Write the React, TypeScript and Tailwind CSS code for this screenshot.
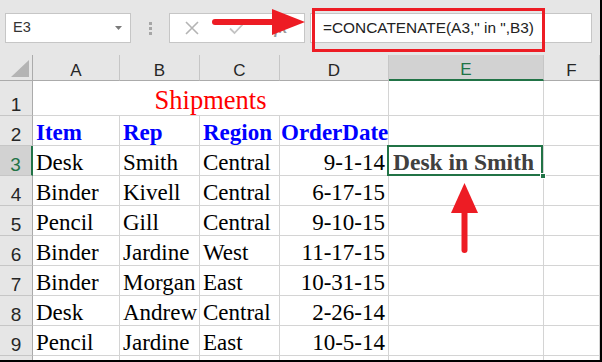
import React from "react";
import clsx from "clsx";

const rows = [
  ["Desk", "Smith", "Central", "9-1-14"],
  ["Binder", "Kivell", "Central", "6-17-15"],
  ["Pencil", "Gill", "Central", "9-10-15"],
  ["Binder", "Jardine", "West", "11-17-15"],
  ["Binder", "Morgan", "East", "10-31-15"],
  ["Desk", "Andrew", "Central", "2-26-14"],
  ["Pencil", "Jardine", "East", "10-5-14"],
];

const cols = ["A", "B", "C", "D", "E", "F"];

// gridline for a normal cell
const cell =
  "flex items-end border-r border-b border-[#d4d4d4] bg-white pb-[1px] leading-none whitespace-nowrap";

function RowHead({ n, active }: { n?: number; active?: boolean }) {
  return (
    <div
      className={clsx(
        "flex items-end justify-center border-b pb-[1px] font-['Liberation_Sans',sans-serif] text-[19px] leading-none",
        active
          ? "bg-[#d2d2d2] text-[#217346] border-r-2 border-r-[#217346] border-b-[#c6c6c6]"
          : "bg-[#e6e6e6] text-[#262626] border-r border-r-[#ababab] border-b-[#c6c6c6]"
      )}
    >
      {n}
    </div>
  );
}

function ColHead({ label, active }: { label: string; active?: boolean }) {
  return (
    <div
      className={clsx(
        "flex items-end justify-center border-r border-r-[#c6c6c6] pb-[1px] font-['Liberation_Sans',sans-serif] text-[17px] leading-none",
        active
          ? "bg-[#d2d2d2] text-[#217346] border-b-2 border-b-[#217346]"
          : "bg-[#e6e6e6] text-[#262626] border-b border-b-[#ababab]"
      )}
    >
      {label}
    </div>
  );
}

export default function App() {
  return (
    <div className="relative flex h-[362px] w-[602px] flex-col overflow-hidden border-r-2 border-b-2 border-black bg-white font-['Liberation_Serif',serif]">
      {/* formula bar */}
      <div className="flex h-[55px] shrink-0 items-start bg-[#e6e6e6] pt-[13px] pl-[5px] pr-[8px]">
        <div className="flex h-[30px] w-[126px] items-center justify-between border border-[#c6c6c6] bg-white pl-[7px] pr-[8px] font-['Liberation_Sans',sans-serif] text-[14.5px] text-[#333]">
          <span>E3</span>
          <svg width="7" height="4" viewBox="0 0 7 4">
            <path d="M0 0h7L3.5 4z" fill="#7a7a7a" />
          </svg>
        </div>
        <div className="flex h-[30px] w-[38px] flex-col items-center justify-center gap-[2px]">
          <span className="h-[3px] w-[3px] bg-[#a6a6a6]" />
          <span className="h-[3px] w-[3px] bg-[#a6a6a6]" />
          <span className="h-[3px] w-[3px] bg-[#a6a6a6]" />
        </div>
        <div className="flex h-[30px] w-[136px] items-center border border-[#c6c6c6] bg-white pl-[14px]">
          <svg width="16" height="14" viewBox="0 0 16 14">
            <path d="M2 1l12 12M14 1L2 13" stroke="#b4b4b4" strokeWidth="1.6" fill="none" />
          </svg>
          <svg className="ml-[29px]" width="16" height="14" viewBox="0 0 16 14">
            <path d="M1 7.5l4.5 4.5L15 2" stroke="#c3c3c3" strokeWidth="1.8" fill="none" />
          </svg>
          <span className="ml-[29px] font-['Liberation_Serif',serif] text-[16px] font-bold italic text-[#9a9a9a]">
            fx
          </span>
        </div>
        <div className="ml-[5px] flex h-[30px] flex-1 items-center border border-[#c6c6c6] bg-white pl-[12px] font-['Liberation_Sans',sans-serif] text-[15.4px] text-[#222] whitespace-nowrap">
          =CONCATENATE(A3," in ",B3)
        </div>
      </div>

      {/* sheet */}
      <div className="grid grid-cols-[33px_87px_80px_80px_109px_155px_1fr] grid-rows-[26px_35px_repeat(9,30px)]">
        <div className="relative border-r border-b border-r-[#ababab] border-b-[#ababab] bg-[#e6e6e6]">
          <svg className="absolute right-[3px] bottom-[3px]" width="18" height="17" viewBox="0 0 18 17">
            <path d="M18 0V17H0z" fill="#b4b4b4" />
          </svg>
        </div>
        {cols.map((c) => (
          <ColHead key={c} label={c} active={c === "E"} />
        ))}

        {/* row 1 */}
        <RowHead n={1} />
        <div className={clsx(cell, "col-span-4 justify-center pb-[2px] text-[26.5px] text-[#ff0000]")}>
          Shipments
        </div>
        <div className={cell} />
        <div className={cell} />

        {/* row 2 */}
        <RowHead n={2} />
        {["Item", "Rep", "Region"].map((h) => (
          <div key={h} className={clsx(cell, "pl-[3px] text-[23px] font-bold text-[#0000ff]")}>
            {h}
          </div>
        ))}
        <div className={clsx(cell, "pl-[1px] text-[23px] font-bold text-[#0000ff]")}>OrderDate</div>
        <div className={cell} />
        <div className={cell} />

        {rows.map((r, i) => (
          <React.Fragment key={i}>
            <RowHead n={i + 3} active={i === 0} />
            <div className={clsx(cell, "pl-[3px] text-[23px] text-black")}>{r[0]}</div>
            <div className={clsx(cell, "pl-[3px] text-[23px] text-black")}>{r[1]}</div>
            <div className={clsx(cell, "pl-[3px] text-[23px] text-black")}>{r[2]}</div>
            <div className={clsx(cell, "justify-end pr-[3px] text-[23px] text-black")}>{r[3]}</div>
            {i === 0 ? (
              <div className={clsx(cell, "relative pl-[4px] text-[23.5px] font-bold text-[#404040]")}>
                Desk in Smith
                <div className="absolute -top-[1px] -left-[2px] h-[calc(100%+2px)] w-[calc(100%+2px)] border-2 border-[#217346]" />
                <div className="absolute -right-[3px] -bottom-[4px] h-[6px] w-[6px] border border-white bg-[#217346]" />
              </div>
            ) : (
              <div className={cell} />
            )}
            <div className={cell} />
          </React.Fragment>
        ))}

        {/* row 10, only its top edge is in view */}
        <RowHead />
        {cols.map((c) => (
          <div key={c} className={cell} />
        ))}
      </div>

      {/* callouts */}
      <div className="pointer-events-none absolute top-[8px] left-[312px] h-[44px] w-[233px] border-[3px] border-[#ed1c24]" />
      <svg className="pointer-events-none absolute top-0 left-0" width="600" height="360">
        <line x1="215" y1="22" x2="276" y2="22" stroke="#ed1c24" strokeWidth="6" strokeLinecap="round" />
        <polygon points="272,9 305,22 272,35" fill="#ed1c24" />
        <line x1="464.5" y1="208" x2="464.5" y2="250" stroke="#ed1c24" strokeWidth="6" strokeLinecap="round" />
        <polygon points="464.5,183 478,213 451,213" fill="#ed1c24" />
      </svg>
    </div>
  );
}
